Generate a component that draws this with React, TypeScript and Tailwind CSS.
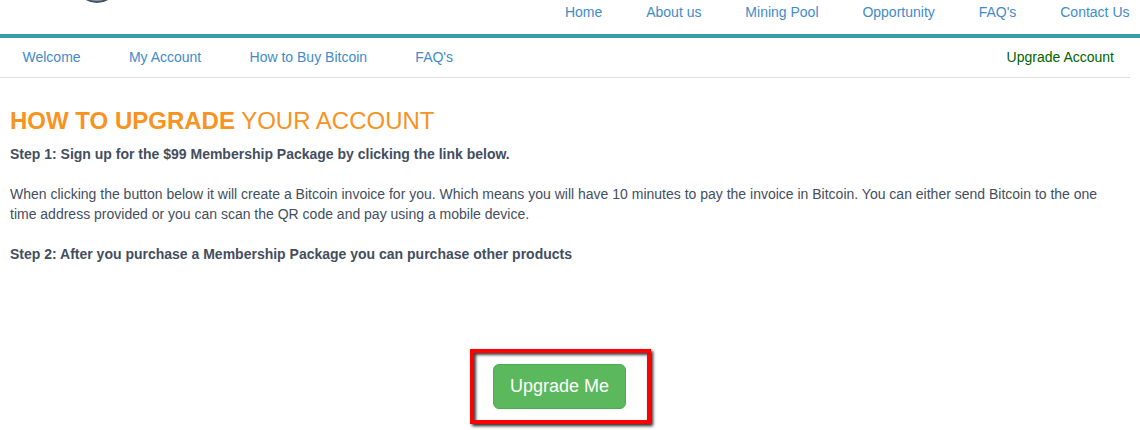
const mainLinks = ['Home', 'About us', 'Mining Pool', 'Opportunity', "FAQ's", 'Contact Us'];
const accountLinks = ['Welcome', 'My Account', 'How to Buy Bitcoin', "FAQ's"];

function Header() {
  return (
    <header className="flex h-[38px] items-start justify-between border-b-4 border-[#3a9dae] pt-0.5 pr-[10.5px] pl-[75px]">
      <svg className="-mt-[42px] size-11 shrink-0" viewBox="0 0 44 44" aria-hidden="true">
        <circle cx="22" cy="21.5" r="20.6" fill="#8e9aa5" stroke="#43546a" strokeWidth="2" />
      </svg>
      <nav className="flex gap-[43.9px]">
        {mainLinks.map((label) => (
          <a key={label} href="#" className="text-[#428bca]">{label}</a>
        ))}
      </nav>
    </header>
  );
}

function AccountBar() {
  return (
    <nav className="mr-2.5 flex h-10 justify-between border-b border-[#ddd] pt-[9px] pr-4 pl-[22.5px]">
      <div className="flex gap-[48.3px]">
        {accountLinks.map((label) => (
          <a key={label} href="#" className="text-[#428bca]">{label}</a>
        ))}
      </div>
      <a href="#" className="text-[#006400]">Upgrade Account</a>
    </nav>
  );
}

export default function App() {
  return (
    <div className="h-[430px] overflow-hidden bg-white font-['Liberation_Sans',Arial,sans-serif] text-sm leading-5 text-[#434e5e]">
      <Header />
      <AccountBar />
      <main className="px-2.5 pt-[30px]">
        <h1 className="text-2xl leading-[26px] text-[#f7931e]">
          <strong className="font-bold">HOW TO UPGRADE</strong> YOUR ACCOUNT
        </h1>
        <p className="mt-2.5 font-bold">Step 1: Sign up for the $99 Membership Package by clicking the link below.</p>
        <p className="mt-5 max-w-[1100px]">
          When clicking the button below it will create a Bitcoin invoice for you. Which means you will have 10 minutes to pay the invoice in Bitcoin. You can either send Bitcoin to the one time address provided or you can scan the QR code and pay using a mobile device.
        </p>
        <p className="mt-5 font-bold">Step 2: After you purchase a Membership Package you can purchase other products</p>
        <div className="mt-[85px] ml-[460px] flex h-[75px] w-[181px] border-4 border-[#fe0000] pt-[11px] pl-[19px] shadow-[2px_2px_3px_rgba(0,0,0,0.85),inset_2px_2px_3px_rgba(0,0,0,0.75)]">
          <button className="h-[45px] w-[133px] rounded-md border border-[#4cae4c] bg-[#5cb85c] pb-0.5 text-lg leading-6 text-white">Upgrade Me</button>
        </div>
      </main>
    </div>
  );
}
